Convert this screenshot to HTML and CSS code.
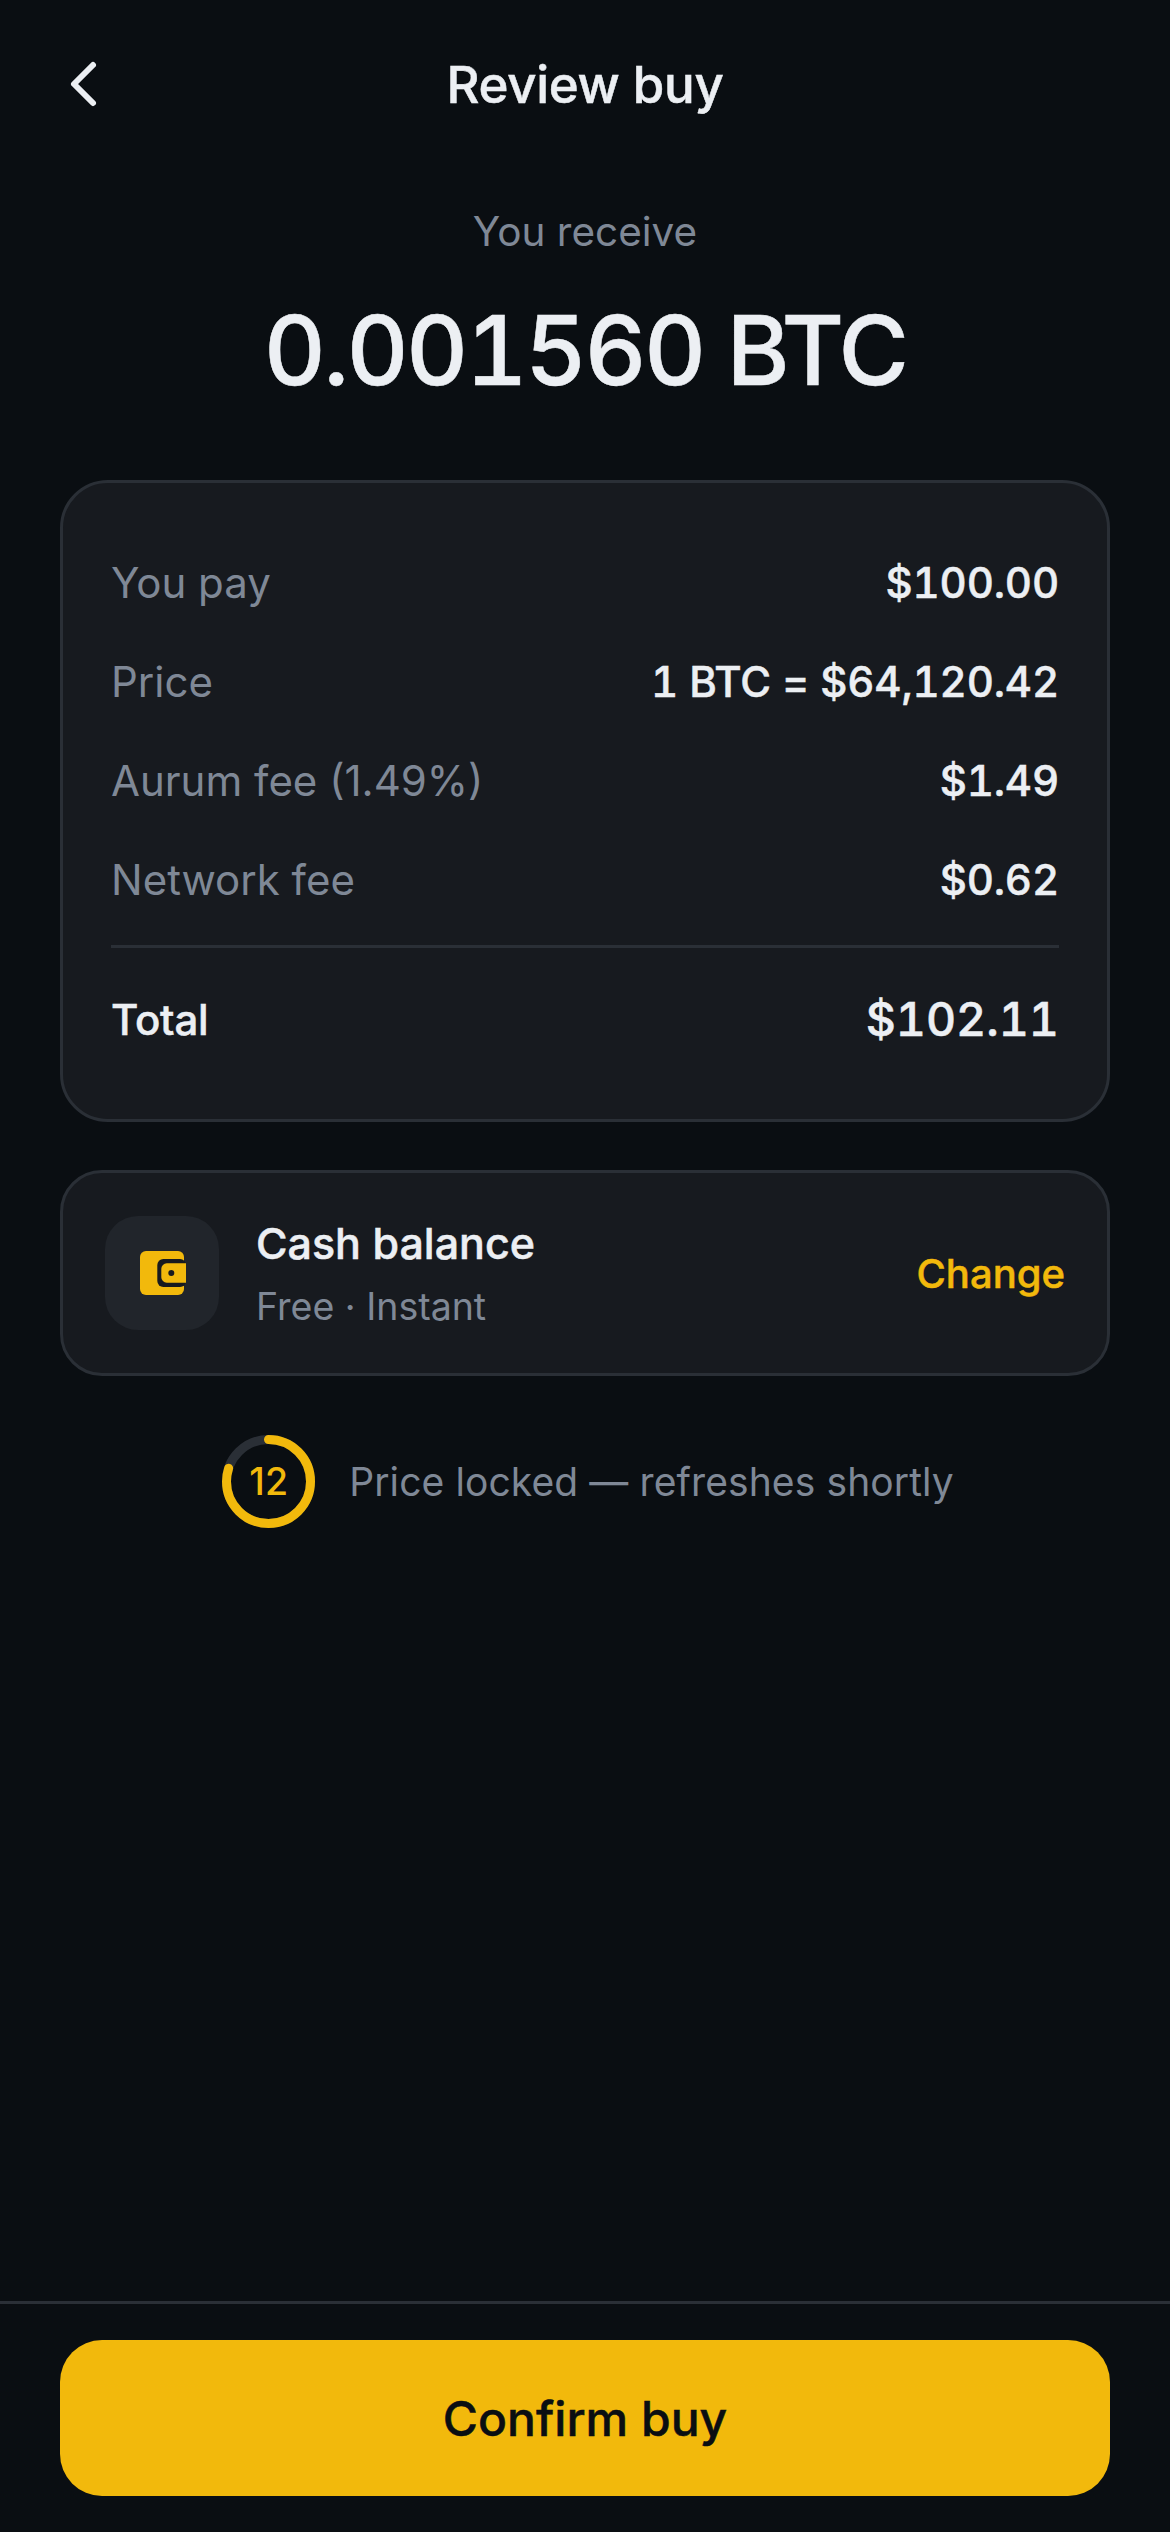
FILE: index.html
```html
<!DOCTYPE html>
<html lang="en">

<head>
    <meta charset="UTF-8">
    <meta name="viewport" content="width=device-width, initial-scale=1.0">
    <title>Review buy</title>
    <link rel="stylesheet" href="styles.css">
</head>

<body>

    <div class="screen">
        <header class="top-bar">
            <button class="back-btn" aria-label="Back">
                <svg width="36" height="48" viewBox="0 0 36 48">
                    <path d="M27 5 L8 24 L27 43" fill="none" stroke="#eceff3" stroke-width="6" stroke-linecap="round" stroke-linejoin="round" />
                </svg>
            </button>
            <h1 class="top-title">Review buy</h1>
        </header>

        <main class="content">
            <section class="receive">
                <p class="receive-label">You receive</p>
                <p class="receive-amount">0.001560 BTC</p>
            </section>

            <section class="card summary">
                <div class="row">
                    <span class="row-label">You pay</span>
                    <span class="row-value">$100.00</span>
                </div>
                <div class="row">
                    <span class="row-label">Price</span>
                    <span class="row-value">1 BTC = $64,120.42</span>
                </div>
                <div class="row">
                    <span class="row-label">Aurum fee (1.49%)</span>
                    <span class="row-value">$1.49</span>
                </div>
                <div class="row">
                    <span class="row-label">Network fee</span>
                    <span class="row-value">$0.62</span>
                </div>
                <div class="row total">
                    <span class="total-label">Total</span>
                    <span class="total-value">$102.11</span>
                </div>
            </section>

            <section class="card method">
                <div class="method-icon">
                    <svg width="46" height="44" viewBox="0 0 46 44">
                        <rect x="0" y="0" width="44" height="44" rx="6" fill="#f2b90c" />
                        <rect x="17.3" y="8" width="28.7" height="28" rx="6" fill="#171a1f" />
                        <path d="M27 12.3 H46 V31.7 H27 A5.5 5.5 0 0 1 21.3 26 V18 A5.5 5.5 0 0 1 27 12.3 Z" fill="#f2b90c" />
                        <circle cx="31.3" cy="22" r="3" fill="#171a1f" />
                    </svg>
                </div>
                <div class="method-text">
                    <span class="method-name">Cash balance</span>
                    <span class="method-note">Free · Instant</span>
                </div>
                <span class="method-change">Change</span>
            </section>

            <div class="timer">
                <div class="timer-ring">
                    <svg width="93" height="93" viewBox="0 0 93 93">
                        <circle cx="46.5" cy="46.5" r="42" fill="none" stroke="#2a2f36" stroke-width="9" />
                        <circle class="timer-progress" cx="46.5" cy="46.5" r="42" fill="none" stroke="#f2b90c" stroke-width="9" stroke-linecap="round" stroke-dasharray="211 264" />
                    </svg>
                    <span class="timer-count">12</span>
                </div>
                <span class="timer-text">Price locked — refreshes shortly</span>
            </div>
        </main>

        <footer class="bottom-bar">
            <button class="confirm-btn">Confirm buy</button>
        </footer>
    </div>

</body>

</html>
```

FILE: styles.css
```css
* {
    box-sizing: border-box;
}

body {
    margin: 0;
    background-color: #0a0e12;
    color: #eceff3;
    font-family: Inter, "Liberation Sans", sans-serif;
}

.screen {
    display: flex;
    flex-direction: column;
    height: 2532px;
}

.top-bar {
    display: flex;
    align-items: center;
    justify-content: center;
    position: relative;
    height: 168px;
}

.back-btn {
    position: absolute;
    left: 66px;
    top: 60px;
    padding: 0;
    border: none;
    background: none;
    line-height: 0;
}

/* medium text sits a little heavier than 500 here */
.top-title,
.receive-amount,
.row-value,
.total-label,
.total-value,
.method-name,
.method-change,
.confirm-btn {
    font-weight: 500;
    -webkit-text-stroke: 0.5px currentColor;
}

.top-title {
    margin: 0;
    font-size: 51px;
    letter-spacing: -0.3px;
}

.content {
    flex: 1;
    padding: 0 60px;
}

.receive {
    margin-bottom: 72px;
    text-align: center;
}

.receive-label {
    margin: 36px 0 0;
    color: #7f8896;
    font-size: 40.5px;
    line-height: 56px;
}

.receive-amount {
    margin: 32px 0 0;
    font-size: 96px;
    font-variant-numeric: tabular-nums;
    line-height: 116px;
    letter-spacing: -2.7px;
}

.card {
    background-color: #171a1f;
    border: 3px solid #2a2f36;
    border-radius: 48px;
}

.summary {
    padding: 50px 48px 29px;
}

.row {
    display: flex;
    align-items: center;
    justify-content: space-between;
    height: 99px;
}

.row-label {
    color: #7f8896;
    font-size: 42px;
}

.row-value {
    font-size: 42px;
    font-variant-numeric: tabular-nums;
    letter-spacing: -0.15px;
}

.total {
    height: 145px;
    margin-top: 16px;
    border-top: 3px solid #2a2f36;
}

.total-label {
    font-size: 42px;
    letter-spacing: -0.2px;
}

.total-value {
    font-size: 46.5px;
    font-variant-numeric: tabular-nums;
}

.method {
    display: flex;
    align-items: center;
    height: 206px;
    margin-top: 48px;
    padding: 0 42px;
    border-radius: 42px;
}

.method-icon {
    display: flex;
    align-items: center;
    justify-content: center;
    width: 114px;
    height: 114px;
    padding-left: 2px;
    border-radius: 33px;
    background-color: #21252b;
}

.method-text {
    display: flex;
    flex: 1;
    flex-direction: column;
    gap: 15px;
    margin-left: 37px;
}

.method-name {
    font-size: 43px;
}

.method-note {
    color: #7f8896;
    font-size: 37.5px;
}

.method-change {
    color: #f2b90c;
    font-size: 40px;
}

.timer {
    display: flex;
    align-items: center;
    justify-content: center;
    gap: 34px;
    margin-top: 59px;
    padding-left: 6px;
}

.timer-ring {
    display: flex;
    align-items: center;
    justify-content: center;
    position: relative;
    width: 93px;
    height: 93px;
}

.timer-progress {
    transform: rotate(-90deg);
    transform-origin: center;
}

.timer-count {
    position: absolute;
    color: #f2b90c;
    font-size: 37.5px;
    font-weight: 500;
}

.timer-text {
    color: #7f8896;
    font-size: 39px;
    letter-spacing: 0.1px;
}

.bottom-bar {
    padding: 36px 60px;
    border-top: 3px solid #2a2f36;
}

.confirm-btn {
    display: block;
    width: 100%;
    height: 156px;
    border: none;
    border-radius: 42px;
    background-color: #f2b90c;
    color: #0a0e12;
    font-family: inherit;
    font-size: 48px;
}
```
